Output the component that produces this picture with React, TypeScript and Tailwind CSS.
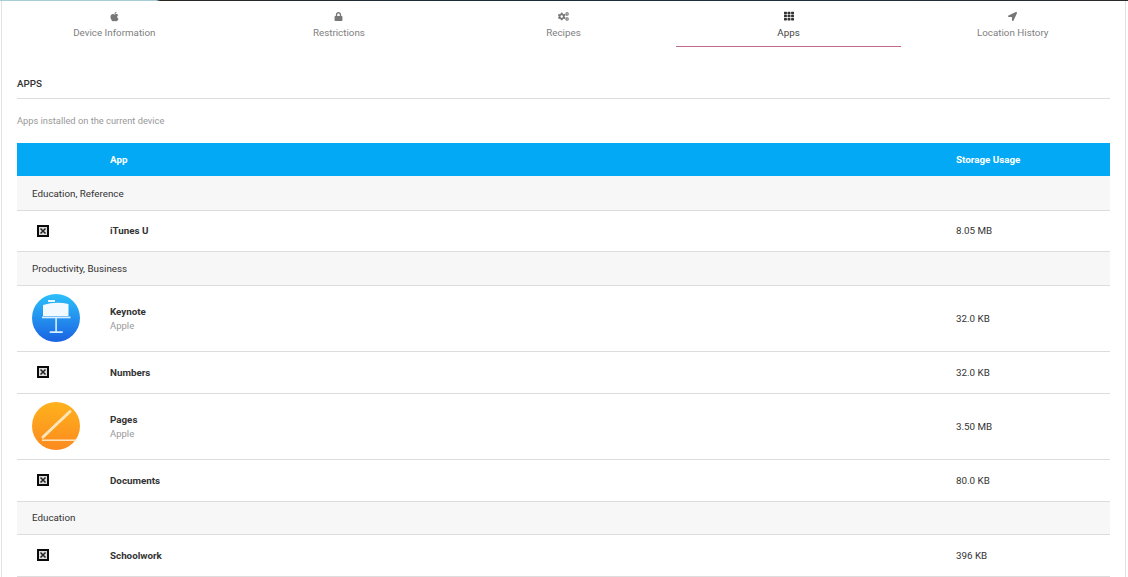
import React from "react";
import { FaApple, FaLock, FaCogs, FaTh, FaLocationArrow } from "react-icons/fa";

const tabs = [
  { label: "Device Information", Icon: FaApple, size: "text-[11px]" },
  { label: "Restrictions", Icon: FaLock, size: "text-[9px]" },
  { label: "Recipes", Icon: FaCogs, size: "text-[11px]" },
  { label: "Apps", Icon: FaTh, size: "text-[10px]", active: true },
  { label: "Location History", Icon: FaLocationArrow, size: "text-[9px]" },
];

function Broken() {
  return (
    <svg width="12" height="12" viewBox="0 0 12 12" className="block">
      <rect x="1" y="1" width="10" height="10" fill="#dcdcdc" stroke="#0a0a0a" strokeWidth="2" />
      <path d="M3.500 3.500 L8.500 8.500 M8.500 3.500 L3.500 8.500" stroke="#222" strokeWidth="1.500" />
    </svg>
  );
}

function Keynote() {
  return (
    <svg width="48" height="48" viewBox="0 0 48 48" className="block">
      <defs>
        <linearGradient id="kn" x1="0" y1="0" x2="0" y2="1">
          <stop offset="0" stopColor="#2cc0fb" />
          <stop offset="1" stopColor="#1a62e2" />
        </linearGradient>
      </defs>
      <circle cx="24" cy="24" r="24" fill="url(#kn)" />
      <path d="M16 6 H23 V8 H16 Z" fill="#e8f6ff" />
      <path d="M11 11 Q24 7 36.500 10 V22 H11 Z" fill="#f2faff" />
      <rect x="10" y="22.500" width="28.500" height="1.800" fill="#d8efff" />
      <rect x="23.300" y="24" width="1.600" height="14" fill="#d8efff" />
      <rect x="17.500" y="37.300" width="13.500" height="1.600" rx="0.800" fill="#d8efff" />
    </svg>
  );
}

function Pages() {
  return (
    <svg width="48" height="48" viewBox="0 0 48 48" className="block">
      <defs>
        <linearGradient id="pg" x1="0" y1="0" x2="0" y2="1">
          <stop offset="0" stopColor="#ffb21d" />
          <stop offset="1" stopColor="#fb8a1f" />
        </linearGradient>
      </defs>
      <circle cx="24" cy="24" r="24" fill="url(#pg)" />
      <path d="M11 35 L38 9.500" stroke="#ffe6b8" strokeWidth="3" strokeLinecap="round" />
      <rect x="10" y="37.500" width="35" height="1.400" fill="#ffeccb" />
    </svg>
  );
}

function Group({ label, h }: { label: string; h: string }) {
  return (
    <div className={`flex items-center pl-[15px] bg-[#f7f7f7] border-b border-[#dddddd] text-[#333] ${h}`}>
      {label}
    </div>
  );
}

function Row({
  name,
  sub,
  size,
  h,
  icon,
}: {
  name: string;
  sub?: string;
  size: string;
  h: string;
  icon: React.ReactNode;
}) {
  return (
    <div className={`grid grid-cols-[93px_846px_1fr] items-center border-b border-[#dddddd] ${h}`}>
      <div className="pl-[15px] pb-[1px]">{icon}</div>
      <div>
        <div className="font-bold text-[#333]">{name}</div>
        {sub && <div className="text-[9.5px] text-[#999]">{sub}</div>}
      </div>
      <div className="text-[#333]">{size}</div>
    </div>
  );
}

const Miss = () => (
  <div className="pl-[5px]">
    <Broken />
  </div>
);

export default function App() {
  return (
    <div className="w-[1128px] h-[577px] overflow-hidden bg-white font-['Roboto',sans-serif] text-[9.8px] leading-[14px]">
      <div className="h-px bg-[linear-gradient(90deg,#a9cdd8_0,#a9cdd8_156px,#2a2622_160px,#1d2c36_400px,#1c3040_800px,#2a2a2a_1128px)]" />
      <div className="h-[576px] ml-px mr-[2px] border-x border-[#e2e2e2] overflow-hidden">
        <div className="grid grid-cols-5 h-[46px]">
          {tabs.map(({ label, Icon, active, size }) => (
            <div
              key={label}
              className={`flex flex-col items-center ${
                active ? "border-b border-[#c2688f] text-[#444] h-[46px] mr-[-1px]" : "text-[#808080]"
              }`}
            >
              <div className="h-[10px] mt-[10px] flex items-center justify-center">
                <Icon className={`${size} ${active ? "text-[#333]" : "text-[#777]"}`} />
              </div>
              <span className="mt-[5px] text-[9.8px] leading-[14px]">{label}</span>
            </div>
          ))}
        </div>
        <div className="pl-[15px] pr-[15px]">
          <div className="mt-[29px] h-[23px] border-b border-[#dddddd] font-medium text-[#333] leading-[16px]">APPS</div>
          <div className="mt-[15px] h-[29px] text-[#999] text-[9.3px] leading-[14px]">Apps installed on the current device</div>
          <div className="grid grid-cols-[93px_846px_1fr] items-center h-[33px] bg-[#03a9f4] text-white font-bold">
            <div />
            <div>App</div>
            <div>Storage Usage</div>
          </div>
          <Group label="Education, Reference" h="h-[35px] pt-[2px]" />
          <Row name="iTunes U" size="8.05 MB" h="h-[41px]" icon={<Miss />} />
          <Group label="Productivity, Business" h="h-[34px]" />
          <Row name="Keynote" sub="Apple" size="32.0 KB" h="h-[66px]" icon={<Keynote />} />
          <Row name="Numbers" size="32.0 KB" h="h-[42px]" icon={<Miss />} />
          <Row name="Pages" sub="Apple" size="3.50 MB" h="h-[66px]" icon={<Pages />} />
          <Row name="Documents" size="80.0 KB" h="h-[42px]" icon={<Miss />} />
          <Group label="Education" h="h-[33px]" />
          <Row name="Schoolwork" size="396 KB" h="h-[42px]" icon={<Miss />} />
        </div>
      </div>
    </div>
  );
}
